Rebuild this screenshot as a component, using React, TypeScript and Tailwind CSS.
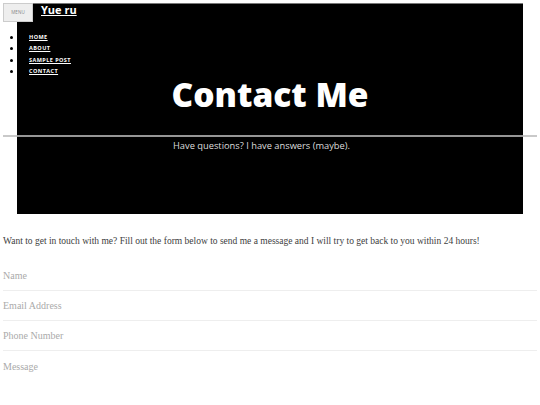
import React from "react";

export default function App() {
  const nav = ["Home", "About", "Sample Post", "Contact"];
  const fields = ["Name", "Email Address", "Phone Number", "Message"];
  return (
    <div className="w-[540px] h-[405px] overflow-hidden bg-white px-[3px] pt-[3px]" style={{ fontFamily: "'Open Sans', sans-serif" }}>
      <div className="relative">
        <div className="mx-[14px] h-[211px] bg-black border-t border-[#777]" />
        {/* overlaid header contents */}
        <div className="absolute left-0 top-0 w-full">
          <div className="flex items-start">
            <button className="w-[30px] h-[19px] bg-[#eeeeee] border border-[#cccccc] text-[4.5px] text-[#888] flex items-center justify-center tracking-wide">MENU</button>
            <a className="ml-[8px] mt-[0px] text-white font-bold text-[11px] leading-[14px] underline">Yue ru</a>
          </div>
          <ul className="mt-[10px] flex flex-col text-[5.5px] font-bold uppercase tracking-[0.08em] leading-[11.3px]">
            {nav.map((n) => (
              <li key={n} className="flex items-center">
                <span className="ml-[7px] w-[3px] h-[3px] rounded-full bg-black" />
                <a className="ml-[16px] text-white underline">{n}</a>
              </li>
            ))}
          </ul>
        </div>
        <div className="absolute left-0 top-[69px] w-full flex flex-col items-center">
          <h1 className="text-white font-extrabold text-[33.5px] leading-[44px]">Contact Me</h1>
        </div>
        <div className="absolute left-0 right-0 top-[132px] h-[1.5px] bg-[#bbbbbb] opacity-80" />
        <div className="absolute left-0 top-[136px] w-full flex justify-center">
          <p className="text-[#dddddd] text-[9.3px] font-normal leading-[14px] ml-[-17px]">Have questions? I have answers (maybe).</p>
        </div>
      </div>
      <div style={{ fontFamily: "'Liberation Serif', serif" }}>
        <p className="mt-[20px] text-[9.5px] text-[#404040] leading-[14px]">
          Want to get in touch with me? Fill out the form below to send me a message and I will try to get back to you within 24 hours!
        </p>
        <div className="mt-[13px] flex flex-col">
          {fields.map((f, i) => (
            <div key={f} className={`h-[30px] flex items-center text-[10px] text-[#aaaaaa] ${i < 3 ? "border-b border-[#eeeeee]" : ""}`}>
              {f}
            </div>
          ))}
        </div>
      </div>
    </div>
  );
}
